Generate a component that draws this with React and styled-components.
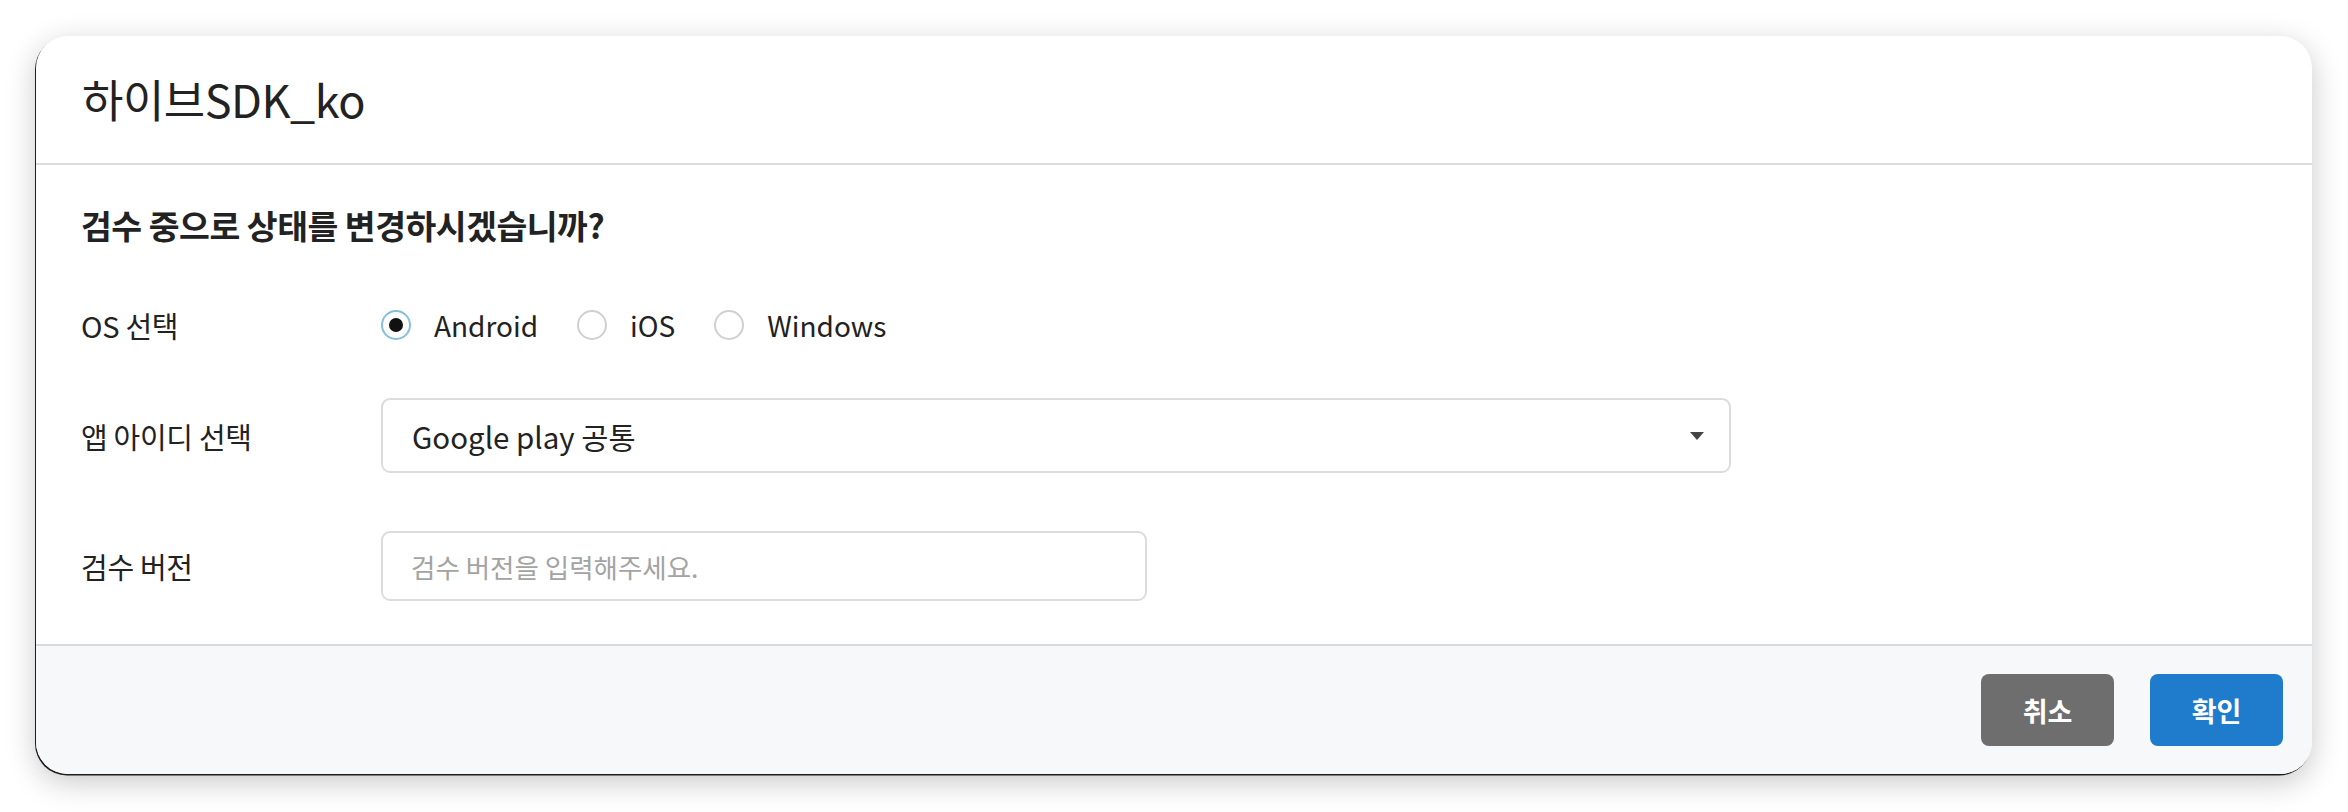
import React, { useState } from 'react';
import styled, { createGlobalStyle } from 'styled-components';

const Global = createGlobalStyle`
  html, body { margin: 0; padding: 0; background: #ffffff; }
  body { font-family: "Noto Sans CJK KR", sans-serif; color: #222; }
  * { box-sizing: border-box; }
`;

const Page = styled.div`
  width: 2348px;
  height: 812px;
  padding: 36px 36px 38px 36px;
`;

const Dialog = styled.div`
  width: 2276px;
  height: 738px;
  background: #ffffff;
  border-radius: 32px;
  overflow: hidden;
  display: flex;
  flex-direction: column;
  box-shadow: -1px 1.5px 0 #1e1e1e, 0 8px 30px rgba(0, 0, 0, 0.22);
`;

const Header = styled.header`
  height: 129px;
  flex: none;
  display: flex;
  align-items: center;
  padding: 0 46px 2px;
  border-bottom: 2px solid #dcdcdc;
`;

const Title = styled.h1`
  margin: 0;
  font-size: 45px;
  font-weight: 400;
  color: #222;
  letter-spacing: -0.5px;
`;

const Body = styled.main`
  flex: 1;
  padding: 40px 45px 0;
`;

const Question = styled.h2`
  margin: 0;
  height: 40px;
  line-height: 40px;
  font-size: 33.5px;
  font-weight: 700;
  color: #222;
  letter-spacing: -0.5px;
`;

const Row = styled.div`
  display: grid;
  grid-template-columns: 300px 1fr;
  align-items: center;
  height: ${(p) => p.$h}px;
  margin-top: ${(p) => p.$mt}px;
`;

const Label = styled.div`
  font-size: 29px;
  color: #222;
  letter-spacing: -0.3px;
`;

const RadioGroup = styled.div`
  display: flex;
  align-items: center;
  gap: 39px;
`;

const RadioOption = styled.label`
  display: flex;
  align-items: center;
  gap: 23px;
  font-size: 28px;
  color: #222;
  cursor: pointer;
`;

const RadioCircle = styled.span`
  width: 30px;
  height: 30px;
  border-radius: 50%;
  border: 2px solid ${(p) => (p.$checked ? '#86bfd8' : '#d0d0d0')};
  background: #fff;
  display: flex;
  align-items: center;
  justify-content: center;
  &::after {
    content: '';
    width: 14px;
    height: 14px;
    border-radius: 50%;
    background: ${(p) => (p.$checked ? '#111' : 'transparent')};
  }
`;

const SelectBox = styled.div`
  width: 1350px;
  height: 75px;
  border: 2px solid #dcdcdc;
  border-radius: 9px;
  display: flex;
  align-items: center;
  justify-content: space-between;
  padding: 0 25px 0 29px;
  font-size: 29.5px;
  color: #222;
`;

const Caret = styled.span`
  width: 0;
  height: 0;
  border-left: 7px solid transparent;
  border-right: 7px solid transparent;
  border-top: 8px solid #444;
`;

const TextInput = styled.input`
  width: 766px;
  height: 70px;
  border: 2px solid #dcdcdc;
  border-radius: 9px;
  padding: 0 28px;
  font-family: "Noto Sans CJK KR", sans-serif;
  font-size: 26.5px;
  color: #222;
  outline: none;
  &::placeholder { color: #a3a3a3; }
`;

const Footer = styled.footer`
  height: 130px;
  flex: none;
  background: #f7f8fa;
  border-top: 2px solid #d9dadd;
  display: flex;
  align-items: center;
  justify-content: flex-end;
  gap: 36px;
  padding: 0 29px 0 0;
`;

const Button = styled.button`
  width: 133px;
  height: 72px;
  border: none;
  border-radius: 8px;
  background: ${(p) => (p.$primary ? '#1f7bcc' : '#6e6e6e')};
  color: #fff;
  font-family: "Noto Sans CJK KR", sans-serif;
  font-size: 27px;
  font-weight: 700;
  cursor: pointer;
`;

const osList = ['Android', 'iOS', 'Windows'];

export default function App() {
  const [os, setOs] = useState('Android');
  return (
    <Page>
      <Global />
      <Dialog>
        <Header>
          <Title>하이브SDK_ko</Title>
        </Header>
        <Body>
          <Question>검수 중으로 상태를 변경하시겠습니까?</Question>
          <Row $h={60} $mt={50}>
            <Label>OS 선택</Label>
            <RadioGroup>
              {osList.map((o) => (
                <RadioOption key={o} onClick={() => setOs(o)}>
                  <RadioCircle $checked={os === o} />
                  {o}
                </RadioOption>
              ))}
            </RadioGroup>
          </Row>
          <Row $h={75} $mt={43}>
            <Label>앱 아이디 선택</Label>
            <SelectBox>
              <span>Google play 공통</span>
              <Caret />
            </SelectBox>
          </Row>
          <Row $h={70} $mt={58}>
            <Label>검수 버전</Label>
            <TextInput placeholder="검수 버전을 입력해주세요." />
          </Row>
        </Body>
        <Footer>
          <Button>취소</Button>
          <Button $primary>확인</Button>
        </Footer>
      </Dialog>
    </Page>
  );
}
